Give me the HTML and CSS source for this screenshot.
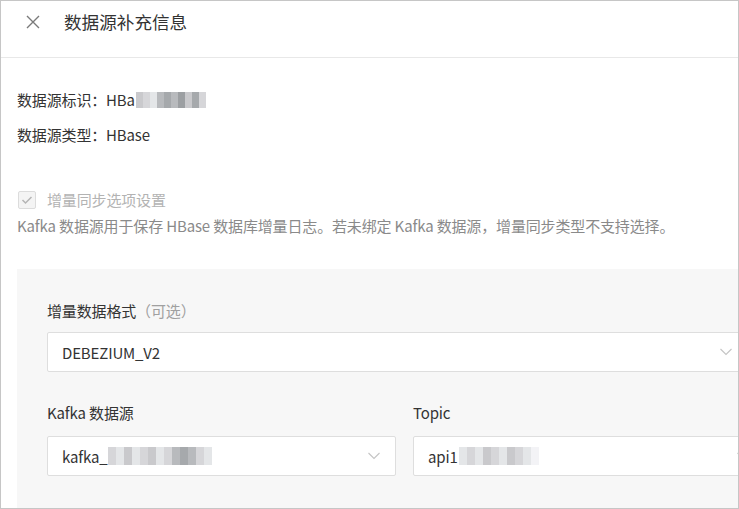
FILE: index.html
```html
<!DOCTYPE html>
<html lang="zh-CN">
<head>
<meta charset="utf-8">
<title>数据源补充信息</title>
<link rel="stylesheet" href="styles.css">
</head>
<body>
<div class="frame">
  <header class="header">
    <span class="close" aria-label="关闭">
      <svg width="14" height="14" viewBox="0 0 14 14"><path d="M1 1L13 13M13 1L1 13" stroke="#7a7a7a" stroke-width="1.4" fill="none"/></svg>
    </span>
    <h1 class="title">数据源补充信息</h1>
  </header>
  <main class="content">
    <div class="info">数据源标识：HBa<span class="blur blur-a"><i class="p3"></i><i class="p2"></i><i class="p1"></i><i class="p4"></i><i class="p5"></i><i class="p4"></i><i class="p6"></i><i class="p3"></i><i class="p5"></i><i class="p2"></i></span></div>
    <div class="info info2">数据源类型：HBase</div>
    <label class="check">
      <span class="box"><svg width="12" height="10" viewBox="0 0 12 10"><path d="M1.5 5L4.5 8L10.5 2" stroke="#b5b5b5" stroke-width="1.5" fill="none"/></svg></span>
      <span class="check-label">增量同步选项设置</span>
    </label>
    <p class="desc">Kafka 数据源用于保存 HBase 数据库增量日志。若未绑定 Kafka 数据源，增量同步类型不支持选择。</p>
    <section class="panel">
      <div class="field">
        <div class="label">增量数据格式<span class="opt">（可选）</span></div>
        <div class="select select-wide">
          <span class="value">DEBEZIUM_V2</span>
          <svg class="arrow" width="12" height="8" viewBox="0 0 12 8"><path d="M0.5 1L6 6.5L11.5 1" stroke="#c4c4c4" stroke-width="1.1" fill="none"/></svg>
        </div>
      </div>
      <div class="row">
        <div class="field field2">
          <div class="label">Kafka 数据源</div>
          <div class="select">
            <span class="value">kafka_<span class="blur blur-b"><i class="p2"></i><i class="p1"></i><i class="p3"></i><i class="p1"></i><i class="p2"></i><i class="p3"></i><i class="p1"></i><i class="p2"></i><i class="p4"></i><i class="p5"></i><i class="p4"></i><i class="p2"></i><i class="p1"></i></span></span>
            <svg class="arrow" width="12" height="8" viewBox="0 0 12 8"><path d="M0.5 1L6 6.5L11.5 1" stroke="#c4c4c4" stroke-width="1.1" fill="none"/></svg>
          </div>
        </div>
        <div class="field field2">
          <div class="label">Topic</div>
          <div class="select">
            <span class="value">api1<span class="blur blur-c"><i class="p1"></i><i class="p2"></i><i class="p1"></i><i class="p3"></i><i class="p2"></i><i class="p1"></i><i class="p3"></i><i class="p2"></i><i class="p1"></i><i class="p0"></i></span></span>
            <svg class="arrow" width="12" height="8" viewBox="0 0 12 8"><path d="M0.5 1L6 6.5L11.5 1" stroke="#c4c4c4" stroke-width="1.1" fill="none"/></svg>
          </div>
        </div>
      </div>
    </section>
  </main>
</div>
</body>
</html>
```
FILE: styles.css
```css
html, body {
  margin: 0;
  padding: 0;
  background: #ffffff;
}
body {
  font-family: "Noto Sans CJK SC", "Noto Sans", sans-serif;
  font-size: 15px;
  letter-spacing: -0.15px;
  color: #333333;
}
.frame {
  box-sizing: border-box;
  width: 739px;
  height: 509px;
  border: 1px solid #c6c6c6;
  overflow: hidden;
  background: #ffffff;
}
.header {
  box-sizing: border-box;
  height: 57px;
  border-bottom: 1px solid #e8e8e8;
  display: flex;
  align-items: flex-start;
  padding-left: 25px;
}
.close {
  display: flex;
  width: 14px;
  height: 14px;
  margin-top: 14px;
}
.title {
  margin: 9px 0 0 24px;
  font-size: 17.6px;
  letter-spacing: 0;
  font-weight: normal;
  color: #333333;
  line-height: 24px;
}
.content {
  padding: 0 0 0 16px;
}
.info {
  margin-top: 32px;
  line-height: 20px;
  height: 20px;
  display: flex;
  align-items: center;
  white-space: nowrap;
}
.info2 {
  margin-top: 15px;
}
.blur {
  display: inline-flex;
  height: 16px;
  vertical-align: middle;
}
.blur i {
  display: block;
  width: 7px;
  height: 100%;
}
.blur-a {
  margin-left: 1px;
}
.blur-b, .blur-c {
  height: 18px;
  margin-left: 1px;
}
.blur-b i {
  width: 8px;
}
.blur-c i {
  width: 8px;
}
.p0 { background: #f3f3f6; }
.p1 { background: #e4e6e8; }
.p2 { background: #d6d6d9; }
.p3 { background: #c9c9cc; }
.p4 { background: #b8babd; }
.p5 { background: #a6a9ac; }
.p6 { background: #9c9fa2; }
.check {
  margin-top: 45px;
  display: flex;
  align-items: center;
  height: 20px;
}
.box {
  box-sizing: border-box;
  width: 18px;
  height: 18px;
  border: 1px solid #dcdcdc;
  border-radius: 2px;
  background: #f4f4f4;
  display: flex;
  align-items: center;
  justify-content: center;
  margin-left: 1px;
}
.check-label {
  margin-left: 11px;
  color: #b3b3b3;
  line-height: 20px;
}
.desc {
  margin: 6px 0 0 0;
  line-height: 20px;
  color: #8a8a8a;
  white-space: nowrap;
}
.panel {
  margin-top: 33px;
  background: #f7f7f7;
  padding: 32px 0 40px 30px;
  width: 760px;
}
.label {
  line-height: 20px;
  color: #333333;
}
.opt {
  color: #a0a0a0;
}
.select {
  box-sizing: border-box;
  height: 40px;
  margin-top: 11px;
  background: #ffffff;
  border: 1px solid #dedede;
  border-radius: 2px;
  display: flex;
  align-items: center;
  justify-content: space-between;
  padding: 0 15px 0 14px;
}
.select-wide {
  width: 701px;
}
.value {
  color: #333333;
  white-space: nowrap;
  display: flex;
  align-items: center;
}
.row {
  display: grid;
  grid-template-columns: 349px 352px;
  column-gap: 17px;
  margin-top: 31px;
}
.field2 .select {
  margin-top: 13px;
}
```
